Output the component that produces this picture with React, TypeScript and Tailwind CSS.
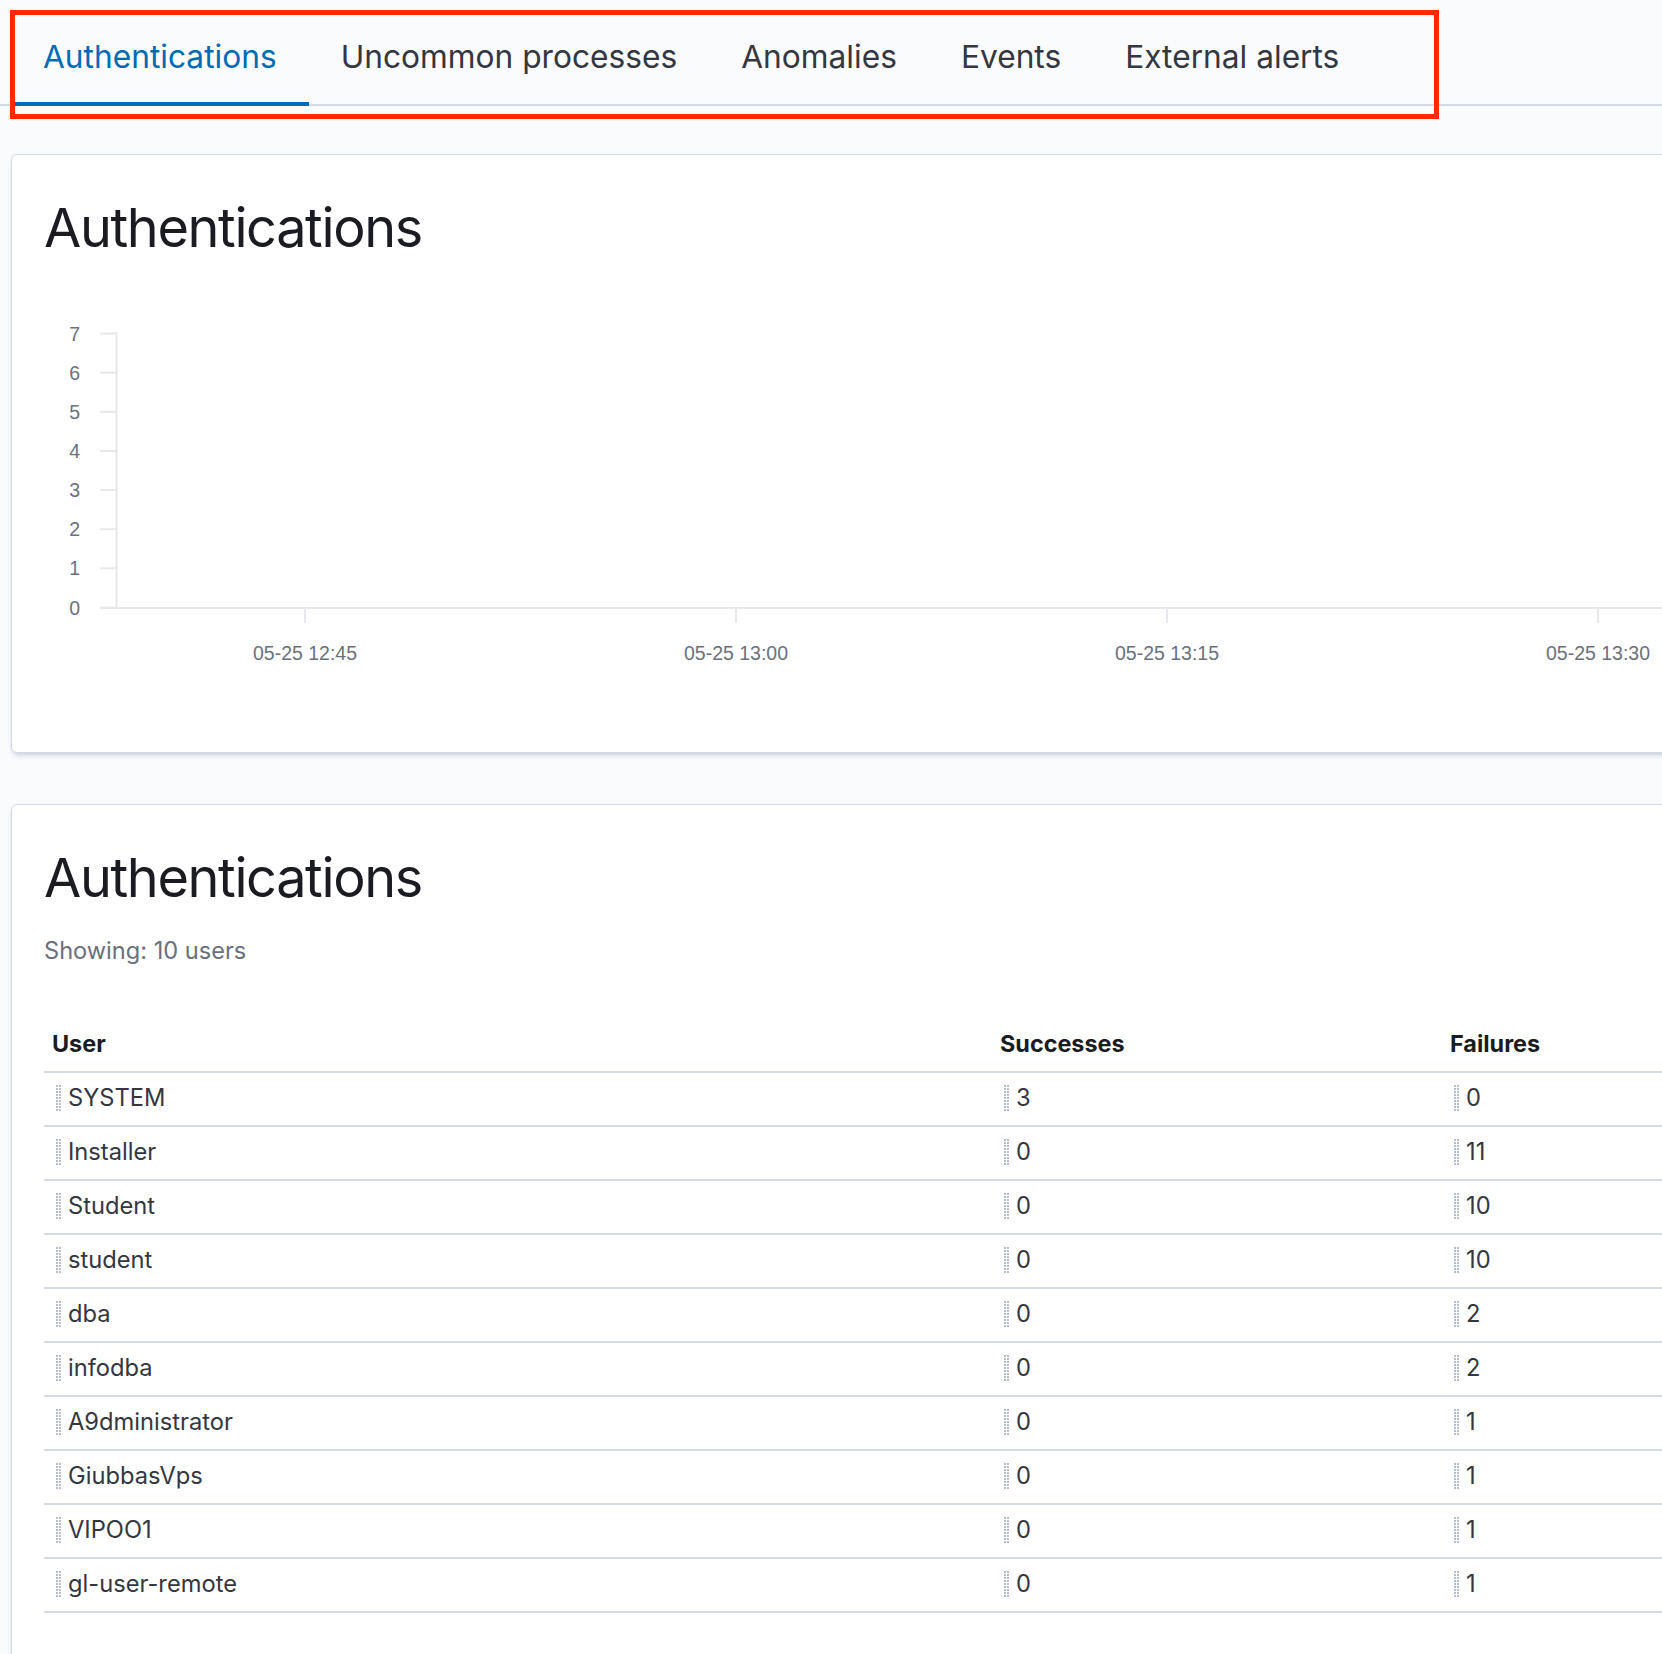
import React from "react";

const tabs = ["Authentications", "Uncommon processes", "Anomalies", "Events", "External alerts"];

const rows: [string, string, string][] = [
  ["SYSTEM", "3", "0"],
  ["Installer", "0", "11"],
  ["Student", "0", "10"],
  ["student", "0", "10"],
  ["dba", "0", "2"],
  ["infodba", "0", "2"],
  ["A9dministrator", "0", "1"],
  ["GiubbasVps", "0", "1"],
  ["VIPOO1", "0", "1"],
  ["gl-user-remote", "0", "1"],
];

function Handle() {
  const dots: React.ReactNode[] = [];
  for (let i = 0; i < 9; i++) {
    dots.push(<circle key={"a" + i} cx={1} cy={1 + i * 3} r={0.95} fill="#98a2b3" />);
    dots.push(<circle key={"b" + i} cx={4} cy={1 + i * 3} r={0.95} fill="#98a2b3" />);
  }
  return (
    <svg width="5" height="26" viewBox="0 0 5 26" className="shrink-0">
      {dots}
    </svg>
  );
}

function Cell({ text, width }: { text: string; width?: string }) {
  return (
    <div className={`${width ?? ""} flex items-center gap-[7px] pl-[12px]`}>
      <Handle />
      <span>{text}</span>
    </div>
  );
}

function Chart() {
  const yLabels = [0, 1, 2, 3, 4, 5, 6, 7];
  const xTicks = [
    { x: 293, label: "05-25 12:45" },
    { x: 724, label: "05-25 13:00" },
    { x: 1155, label: "05-25 13:15" },
    { x: 1586, label: "05-25 13:30" },
  ];
  const stroke = "#e6e8eb";
  return (
    <svg width="1688" height="400" className="mt-[40px] block" style={{ fontFamily: "'Liberation Sans', Arial, sans-serif" }}>
      {yLabels.map((v) => {
        const y = 307.5 - v * 39.14;
        return (
          <g key={v}>
            <line x1={88} x2={104} y1={y} y2={y} stroke={stroke} strokeWidth={2} />
            <text x={68} y={y} textAnchor="end" dominantBaseline="central" fontSize="19.5" fill="#6a717d">
              {v}
            </text>
          </g>
        );
      })}
      <line x1={104.5} x2={104.5} y1={32} y2={308} stroke={stroke} strokeWidth={2} />
      <line x1={88} x2={1688} y1={308} y2={308} stroke={stroke} strokeWidth={2} />
      {xTicks.map((t) => (
        <g key={t.label}>
          <line x1={t.x} x2={t.x} y1={308} y2={323} stroke={stroke} strokeWidth={2} />
          <text x={t.x} y={353} textAnchor="middle" dominantBaseline="central" fontSize="19.5" fill="#6a717d">
            {t.label}
          </text>
        </g>
      ))}
    </svg>
  );
}

export default function App() {
  return (
    <div className="relative w-[1662px] h-[1654px] overflow-hidden bg-[#fafbfd] font-['Inter','Noto_Sans',sans-serif]">
      {/* Tabs */}
      <div className="pt-[9px] border-b-2 border-[#d3dae6]">
        <div className="flex pl-[11px]">
          {tabs.map((t, i) => (
            <div
              key={t}
              className={`relative h-[95px] px-[32px] flex items-center text-[31.7px] leading-none ${
                i === 0 ? "text-[#006bb4]" : "text-[#343741]"
              }`}
            >
              {t}
              {i === 0 && <div className="absolute left-0 right-0 bottom-[-2px] h-[4px] bg-[#006bb4]" />}
            </div>
          ))}
        </div>
      </div>

      {/* Annotation box */}
      <div className="absolute left-[10px] top-[10px] w-[1429px] h-[109px] border-[5px] border-[#ff2a00]" />

      <div className="pl-[11px] pt-[48px]">
        {/* Chart card */}
        <div className="w-[1700px] bg-white border border-[#d3dae6] rounded-[6px] shadow-[0_2px_4px_-1px_rgba(152,162,179,0.35),0_6px_6px_-4px_rgba(152,162,179,0.3)]">
          <div className="px-[32px] pt-[41px]">
            <h2 className="text-[54px] leading-[64px] font-normal tracking-[-0.025em] text-[#1a1c21]">Authentications</h2>
          </div>
          <Chart />
          <div className="h-[52px]" />
        </div>

        {/* Table card */}
        <div className="mt-[51px] w-[1700px] h-[900px] bg-white border border-[#d3dae6] rounded-[6px] shadow-[0_2px_4px_-1px_rgba(152,162,179,0.35),0_6px_6px_-4px_rgba(152,162,179,0.3)]">
          <div className="px-[32px] pt-[41px]">
            <h2 className="text-[54px] leading-[64px] font-normal tracking-[-0.025em] text-[#1a1c21]">Authentications</h2>
            <div className="mt-[25px] text-[23.6px] leading-[32px] text-[#69707d]">Showing: 10 users</div>
            <div className="mt-[52px]">
              <div className="flex h-[54px] pb-[2px] border-b-2 border-[#d3dae6] items-center text-[23.4px] font-bold text-[#1a1c21]">
                <div className="w-[948px] pl-[8px]">User</div>
                <div className="w-[450px] pl-[8px]">Successes</div>
                <div className="flex-1 pl-[8px]">Failures</div>
              </div>
              {rows.map((r) => (
                <div
                  key={r[0]}
                  className="flex h-[54px] pb-[2px] border-b-2 border-[#d3dae6] items-center text-[23.7px] text-[#343741]"
                >
                  <Cell text={r[0]} width="w-[948px]" />
                  <Cell text={r[1]} width="w-[450px]" />
                  <Cell text={r[2]} width="flex-1" />
                </div>
              ))}
            </div>
          </div>
        </div>
      </div>
    </div>
  );
}
